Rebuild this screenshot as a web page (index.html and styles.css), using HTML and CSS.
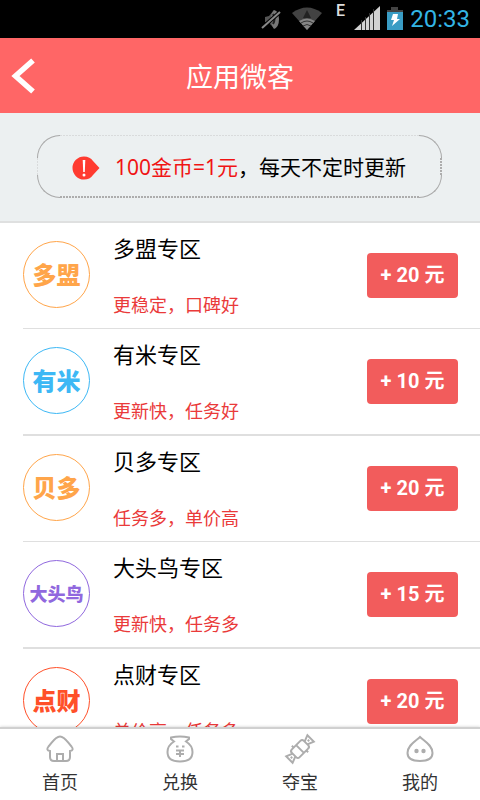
FILE: index.html
```html
<!DOCTYPE html>
<html lang="zh-CN">
<head>
<meta charset="utf-8">
<meta name="viewport" content="width=device-width, initial-scale=1">
<title>应用微客</title>
<link rel="stylesheet" href="styles.css">
</head>
<body>
<div class="status">
  <svg class="status-icons" width="146" height="38" viewBox="0 0 146 38" aria-hidden="true">
    <path d="M7 17l4-1 5-6v18l-5-5-4-1z" fill="#555"/>
    <path d="M16 10q5 1 5 9t-5 10q-3-4-3-10t3-9z" fill="#777"/>
    <path d="M15 14q3 5 0 10" fill="none" stroke="#222" stroke-width="2"/>
    <path d="M4 28L22 12" stroke="#000" stroke-width="4"/>
    <path d="M4 28L22 12" stroke="#888" stroke-width="2"/>
    <path d="M34 13q15-11 30 0L49 30z" fill="#424242"/>
    <path d="M49 10l4 8h-8z" fill="#222"/>
    <path d="M41 21q8-5 16 0l-8 9z" fill="#858585"/>
    <path d="M43 23q6-4 12 0M45 26q4-3 8 0" fill="none" stroke="#333" stroke-width="1"/>
    <path d="M96 30L122 6v24z" fill="#d2d2d2"/>
    <path d="M103.500 20v10M107.500 17v13M111.500 13v17M115.500 9v21" stroke="#333" stroke-width="1"/>
    <path d="M133 7h7v3h5v3h-16v-3h4z" fill="#444"/>
    <path d="M129 12h16v18h-16z" fill="#3a9cc4"/>
    <path d="M135 14h5l-1 5h3l-8 7 2-6h-3z" fill="#fff"/>
  </svg>
  <span class="network">E</span>
  <time class="clock">20:33</time>
</div>

<header class="topbar">
  <button class="back" type="button" aria-label="返回">
    <svg width="26" height="38" viewBox="0 0 26 38" aria-hidden="true"><path d="M23 3.500L5.500 19L23 34.500" fill="none" stroke="#fff" stroke-width="5.500"/></svg>
  </button>
  <h1 class="title">应用微客</h1>
</header>

<section class="notice">
  <div class="notice-box">
    <span class="corner corner-tl"></span><span class="corner corner-tr"></span>
    <span class="corner corner-bl"></span><span class="corner corner-br"></span>
    <svg class="notice-icon" width="28" height="24" viewBox="0 0 28 24" aria-hidden="true">
      <path d="M12 .5C16 .5 19 2 21 5L27.500 12L21 19C19 22 16 23.500 12 23.500A11.500 11.500 0 0 1 12 .5z" fill="#ff3b30"/>
      <path d="M10.700 4h2.600l-.5 12h-1.600z" fill="#fff"/><circle cx="12" cy="19" r="1.500" fill="#fff"/>
    </svg>
    <p class="notice-text"><strong class="rate">100金币=1元</strong>，每天不定时更新</p>
  </div>
</section>

<main class="list-wrap">
  <ul class="list">
    <li class="row">
      <span class="logo orange">多盟</span>
      <div class="info"><h2 class="name">多盟专区</h2><p class="desc">更稳定，口碑好</p></div>
      <button class="earn" type="button">+ 20 元</button>
    </li>
    <li class="row">
      <span class="logo blue">有米</span>
      <div class="info"><h2 class="name">有米专区</h2><p class="desc">更新快，任务好</p></div>
      <button class="earn" type="button">+ 10 元</button>
    </li>
    <li class="row">
      <span class="logo orange">贝多</span>
      <div class="info"><h2 class="name">贝多专区</h2><p class="desc">任务多，单价高</p></div>
      <button class="earn" type="button">+ 20 元</button>
    </li>
    <li class="row">
      <span class="logo purple small">大头鸟</span>
      <div class="info"><h2 class="name">大头鸟专区</h2><p class="desc">更新快，任务多</p></div>
      <button class="earn" type="button">+ 15 元</button>
    </li>
    <li class="row">
      <span class="logo red">点财</span>
      <div class="info"><h2 class="name">点财专区</h2><p class="desc">单价高，任务多</p></div>
      <button class="earn" type="button">+ 20 元</button>
    </li>
  </ul>
</main>

<nav class="tabs">
  <a class="tab" href="#home">
    <svg class="tab-icon" viewBox="0 0 28 28" aria-hidden="true"><path d="M4.500 15.500C1 15.500.5 14 2.500 11.500C6 8 9 1.500 14 1.500S22 8 25.500 11.500C27.500 14 27 15.500 23.500 15.500L24 22Q24 26 20 26H8Q4 26 4 22z" stroke="none"/><path d="M4 16C1 15.500.5 14 2.500 11.500C6 8 9 1.500 14 1.500S22 8 25.500 11.500C27.500 14 27 15.500 24 16V22Q24 26 20 26H8Q4 26 4 22z"/><path d="M11 26v-7h6v7"/></svg>
    首页
  </a>
  <a class="tab" href="#exchange">
    <svg class="tab-icon" viewBox="0 0 28 28" aria-hidden="true"><path d="M8 6.500L5 4V2.500Q14 .5 23 2.500V4L20 6.500C24 9 26.500 13 26.500 17C26.500 23 22 26.500 14 26.500S1.500 23 1.500 17C1.500 13 4 9 8 6.500z"/><path d="M10 11.500h2.500M16 11.500h2.500M10 15.500h8M10 19h8M14 15v7"/></svg>
    兑换
  </a>
  <a class="tab" href="#treasure">
    <svg class="tab-icon" viewBox="0 0 28 28" aria-hidden="true"><g transform="rotate(-45 14 14)"><path d="M8 8.500H20Q22.500 8.500 22.500 11V17Q22.500 19.500 20 19.500H8Q5.500 19.500 5.500 17V11Q5.500 8.500 8 8.500zM10.500 6v2.500M17.500 19.500V22M14 8.500v11"/><path d="M22.500 12L29 9.500V18.500L22.500 16M5.500 12L-1 9.500V18.500L5.500 16M26 13v2M2 13v2"/></g></svg>
    夺宝
  </a>
  <a class="tab" href="#mine">
    <svg class="tab-icon" viewBox="0 0 28 28" aria-hidden="true"><path d="M14 2C18 6 26.500 10 26.500 18C26.500 23.500 22 26 14 26S1.500 23.500 1.500 18C1.500 10 10 6 14 2z"/><g class="dots"><circle cx="10.500" cy="16" r="2.200"/><circle cx="17.500" cy="16" r="2.200"/></g></svg>
    我的
  </a>
</nav>
</body>
</html>
```
FILE: styles.css
```css
* { box-sizing: border-box; }

body {
  display: flex;
  flex-direction: column;
  height: 100vh;
  margin: 0;
  overflow: hidden;
  background: #fff;
  color: #000;
  font-family: "Noto Sans", "Noto Sans CJK SC", sans-serif;
}

h1, h2, p, ul { margin: 0; padding: 0; font-weight: 400; }
button { border: 0; padding: 0; cursor: pointer; }

.status {
  position: relative;
  display: flex;
  flex: none;
  justify-content: flex-end;
  align-items: center;
  gap: 6px;
  height: 38px;
  padding-right: 10px;
  background: #000;
}
.network {
  position: absolute;
  top: 1px;
  right: 135px;
  color: #ddd;
  font: 500 16px/20px Roboto, sans-serif;
}
.clock { color: #33b5e5; font: 24px/38px Roboto, sans-serif; }

.topbar {
  display: grid;
  flex: none;
  grid-template-columns: 48px 1fr 48px;
  align-items: center;
  height: 75px;
  background: #f66;
}
.back { display: flex; height: 75px; padding-left: 10px; align-items: center; background: none; }
.title { padding-top: 2px; color: #fff; font-size: 27px; line-height: 40px; text-align: center; }

.notice {
  flex: none;
  padding: 22px 38px 23px 37px;
  border-bottom: 2px solid #dfe0e0;
  background: #ecf0f1;
}
.notice-box {
  position: relative;
  display: flex;
  align-items: center;
  gap: 15px;
  height: 63px;
  padding-left: 35px;
  background:
    repeating-linear-gradient(to right, #d9dbdc 0 2px, transparent 2px 3px) 50% 0 / calc(100% - 46px) 1px no-repeat,
    repeating-linear-gradient(to right, #adadad 0 2px, transparent 2px 3px) 50% 100% / calc(100% - 46px) 2px no-repeat,
    repeating-linear-gradient(to bottom, #d9dbdc 0 2px, transparent 2px 3px) 0 50% / 1px calc(100% - 46px) no-repeat,
    repeating-linear-gradient(to bottom, #adadad 0 2px, transparent 2px 3px) 100% 50% / 2px calc(100% - 46px) no-repeat;
}
.corner { position: absolute; width: 23px; height: 23px; border: 0 solid #a8a8a8; }
.corner-tl { top: 0; left: 0; border-width: 1px 0 0 1px; border-top-left-radius: 23px; }
.corner-tr { top: 0; right: 0; border-width: 1px 1px 0 0; border-top-right-radius: 23px; }
.corner-bl { bottom: 0; left: 0; border-width: 0 0 1px 1px; border-bottom-left-radius: 23px; }
.corner-br { right: 0; bottom: 0; border-width: 0 1px 1px 0; border-bottom-right-radius: 23px; }
.notice-icon { flex: none; margin-top: 2px; }
.notice-text { font-size: 21px; line-height: 30px; white-space: nowrap; }
.rate { color: #f01414; font-weight: 400; }

.list-wrap { flex: 1; min-height: 0; overflow: hidden; }
.list { padding-left: 23px; list-style: none; }
.row {
  display: flex;
  gap: 23px;
  height: 106px;
  padding-right: 22px;
  border-bottom: 1px solid #dfdfdf;
}
.row:nth-child(even) { height: 107px; border-bottom-width: 2px; }
.logo {
  display: flex;
  flex: none;
  align-items: center;
  justify-content: center;
  width: 67px;
  height: 67px;
  margin-top: 18px;
  border: 1px solid;
  border-radius: 50%;
  font-size: 24px;
  font-weight: 900;
  line-height: 30px;
}
.small { font-size: 18px; }
.orange { color: #ffa54a; }
.blue { color: #3db8f5; }
.purple { color: #9068de; }
.red { color: #ff5029; }
.info { display: flex; flex: 1; flex-direction: column; gap: 28px; padding-top: 9px; }
.name { font-size: 22px; line-height: 32px; }
.desc { color: #ea3a3a; font-size: 18px; line-height: 26px; }
.earn {
  width: 91px;
  height: 45px;
  margin-top: 30px;
  padding-bottom: 2px;
  border-radius: 4px;
  background: #f25c5c;
  color: #fff;
  font: 700 20px/30px Roboto, "Noto Sans CJK SC", sans-serif;
}

.tabs {
  position: relative;
  display: flex;
  flex: none;
  height: 73px;
  padding-top: 6px;
  border-top: 2px solid #d0d0d0;
  background: #fff;
  box-shadow: 0 0 3px rgba(0, 0, 0, .2);
}
.tab {
  display: flex;
  flex: 1;
  flex-direction: column;
  align-items: center;
  gap: 6px;
  color: #333;
  font-size: 18px;
  line-height: 26px;
  text-decoration: none;
}
.tab-icon { width: 28px; height: 28px; overflow: visible; fill: none; stroke: #adadad; stroke-width: 2; }
.dots { fill: #adadad; stroke: none; }
```
